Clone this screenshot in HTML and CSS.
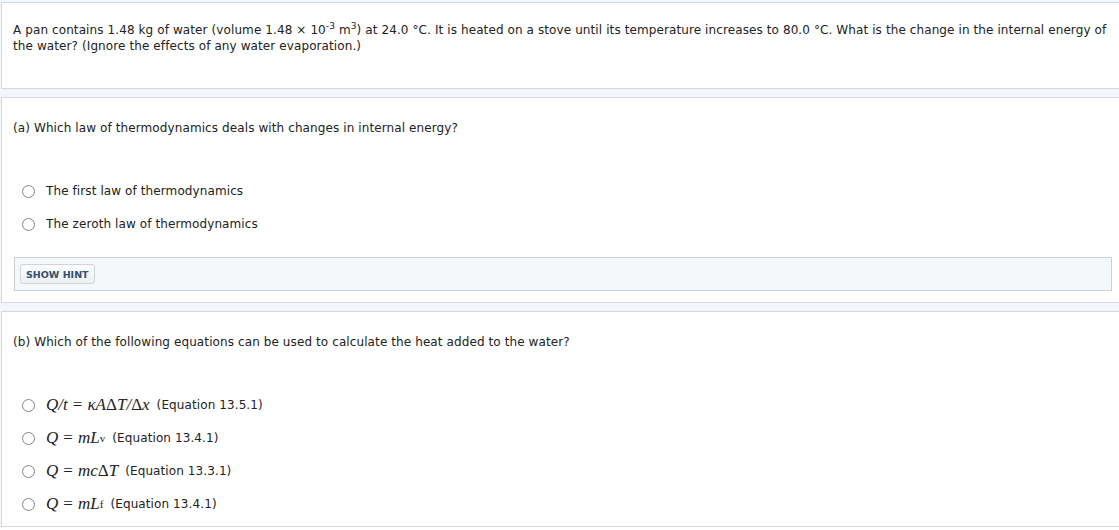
FILE: index.html
```html
<!DOCTYPE html>
<html>
<head>
<meta charset="utf-8">
<link rel="stylesheet" href="styles.css">
</head>
<body>
<div class="page">
  <div class="box intro">
    <p class="text">A pan contains 1.48 kg of water (volume 1.48 × 10<sup>-3</sup> m<sup>3</sup>) at 24.0 °C. It is heated on a stove until its temperature increases to 80.0 °C. What is the change in the internal energy of the water? (Ignore the effects of any water evaporation.)</p>
  </div>
  <div class="box part-a">
    <p class="text question">(a) Which law of thermodynamics deals with changes in internal energy?</p>
    <ul class="options opts-a">
      <li class="opt"><span class="radio"></span><span class="label">The first law of thermodynamics</span></li>
      <li class="opt"><span class="radio"></span><span class="label">The zeroth law of thermodynamics</span></li>
    </ul>
    <div class="hint-bar"><button class="hint-btn">SHOW HINT</button></div>
  </div>
  <div class="box part-b">
    <p class="text question">(b) Which of the following equations can be used to calculate the heat added to the water?</p>
    <ul class="options opts-b">
      <li class="opt"><span class="radio"></span><span class="math">Q</span><span class="math">/</span><span class="math">t</span><span class="math-op">=</span><span class="math">κA</span><span class="math-up">Δ</span><span class="math">T</span><span class="math">/</span><span class="math-up">Δ</span><span class="math">x</span><span class="eq">(Equation 13.5.1)</span></li>
      <li class="opt"><span class="radio"></span><span class="math">Q</span><span class="math-op">=</span><span class="math">mL</span><sub class="msub">v</sub><span class="eq">(Equation 13.4.1)</span></li>
      <li class="opt"><span class="radio"></span><span class="math">Q</span><span class="math-op">=</span><span class="math">mc</span><span class="math-up">Δ</span><span class="math">T</span><span class="eq">(Equation 13.3.1)</span></li>
      <li class="opt"><span class="radio"></span><span class="math">Q</span><span class="math-op">=</span><span class="math">mL</span><sub class="msub">f</sub><span class="eq">(Equation 13.4.1)</span></li>
    </ul>
  </div>
</div>
</body>
</html>
```

FILE: styles.css
```css
html, body {
  margin: 0;
  padding: 0;
  background: #ffffff;
}
.page {
  background: #f3f6fa;
  padding-top: 2px;
  display: flex;
  flex-direction: column;
  gap: 8px;
  font-family: "DejaVu Sans", Verdana, sans-serif;
  font-size: 12px;
  letter-spacing: 0.1px;
  color: #222;
}
.box {
  background: #fff;
  border: 1px solid #d3d8de;
  border-right: none;
  margin-left: 1px;
}
.text {
  margin: 0;
  line-height: 16px;
}
.text sup {
  font-size: 9px;
  line-height: 0;
  vertical-align: 5px;
}
.intro {
  height: 87px;
  padding: 19px 12px 0 11px;
  box-sizing: border-box;
}
.part-a {
  height: 206px;
  box-sizing: border-box;
  padding: 22px 7px 0 11px;
}
.question {
  margin: 0;
}
.options {
  list-style: none;
  margin: 0;
  padding: 0 0 0 8px;
  display: flex;
  flex-direction: column;
}
.opts-a {
  margin-top: 47px;
  gap: 17px;
}
.opt {
  display: flex;
  align-items: center;
  height: 16px;
}
.radio {
  width: 13px;
  height: 13px;
  border: 1px solid #858585;
  border-radius: 50%;
  box-sizing: border-box;
  margin-right: 11px;
  margin-left: 1px;
  flex: none;
}
.hint-bar {
  margin-top: 25px;
  height: 34px;
  box-sizing: border-box;
  background: #f5f8fb;
  border: 1px solid #ccd1d6;
  display: flex;
  align-items: center;
  padding-left: 5px;
  margin-left: 1px;
}
.hint-btn {
  font-family: "DejaVu Sans", Verdana, sans-serif;
  font-weight: bold;
  font-size: 9.5px;
  color: #34506f;
  background: linear-gradient(#fbfcfd, #edf0f3);
  border: 1px solid #cfd4da;
  border-radius: 3px;
  height: 20px;
  padding: 0 5px;
  letter-spacing: 0;
}
.part-b {
  height: 216px;
  box-sizing: border-box;
  padding: 22px 7px 0 11px;
}
.opts-b {
  margin-top: 47px;
  gap: 17px;
}
.math {
  font-family: "Liberation Serif", "Times New Roman", serif;
  font-style: italic;
  font-size: 17px;
  letter-spacing: 0;
}
.math-up {
  font-family: "Liberation Serif", "Times New Roman", serif;
  font-size: 17px;
  letter-spacing: 0;
}
.math-op {
  font-family: "Liberation Serif", "Times New Roman", serif;
  font-size: 17px;
  margin: 0 5px;
}
.msub {
  font-family: "Liberation Serif", "Times New Roman", serif;
  font-size: 11px;
  vertical-align: -4px;
}
.eq {
  margin-left: 7px;
}
```
